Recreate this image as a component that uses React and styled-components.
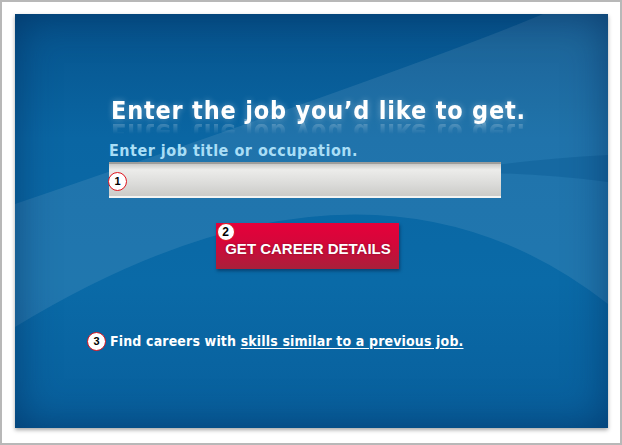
import React from "react";
import styled, { createGlobalStyle } from "styled-components";

const GlobalStyle = createGlobalStyle`
  html, body {
    margin: 0;
    padding: 0;
    background: #ffffff;
  }
  body {
    font-family: "DejaVu Sans Condensed", "DejaVu Sans", sans-serif;
  }
`;

const Frame = styled.div`
  box-sizing: border-box;
  width: 622px;
  height: 445px;
  border: 2px solid #b8b8b8;
  background: #ffffff;
  padding: 12px 12px 0 13px;
`;

const Panel = styled.div`
  position: relative;
  overflow: hidden;
  width: 593px;
  height: 414px;
  background: linear-gradient(to bottom, #06538c 0%, #0a66a3 30%, #0a6aa7 65%, #085f9c 100%);
  box-shadow: 0 2px 4px rgba(0, 0, 0, 0.35);
`;

const Vignette = styled.div`
  position: absolute;
  inset: 0;
  pointer-events: none;
  box-shadow: inset 0 0 40px rgba(0, 35, 80, 0.55);
`;

const Swoosh = styled.svg`
  position: absolute;
  inset: 0;
  width: 100%;
  height: 100%;
`;

const Content = styled.div`
  position: relative;
  display: flex;
  flex-direction: column;
  padding: 82px 0 0 94px;
`;

const Title = styled.h1`
  margin: 0 0 0 2px;
  font-size: 25px;
  line-height: 29px;
  font-weight: bold;
  color: #ffffff;
  letter-spacing: 0.8px;
  text-shadow: 0 0 6px rgba(255, 255, 255, 0.35);
  -webkit-box-reflect: below -7px linear-gradient(transparent 45%, rgba(255, 255, 255, 0.35));
`;

const Label = styled.div`
  margin-top: 16px;
  font-size: 16px;
  line-height: 19px;
  letter-spacing: 0.5px;
  color: #a9def6;
  font-weight: bold;
`;

const InputWrap = styled.div`
  position: relative;
  margin-top: 2px;
  width: 392px;
  height: 36px;
`;

const Input = styled.input`
  box-sizing: border-box;
  width: 100%;
  height: 100%;
  border: none;
  border-top: 2px solid #9d9d9b;
  border-bottom: 2px solid #f4f4f2;
  background: linear-gradient(to bottom, #c9c9c7 0%, #ececea 18%, #dcdcda 60%, #cbcbc8 100%);
  outline: none;
  padding: 0 26px;
  font-size: 14px;
`;

const Badge = styled.span`
  box-sizing: border-box;
  display: inline-flex;
  align-items: center;
  justify-content: center;
  width: 19px;
  height: 19px;
  border-radius: 50%;
  background: #ffffff;
  border: 1.5px solid #e0141e;
  color: #000000;
  font-family: "Liberation Sans", Arial, sans-serif;
  font-weight: bold;
  font-size: 11px;
  letter-spacing: 0;
  line-height: 1;
  flex-shrink: 0;
`;

const InputBadge = styled(Badge)`
  position: absolute;
  left: -1px;
  top: 10px;
`;

const ButtonRow = styled.div`
  display: flex;
  justify-content: center;
  width: 396px;
  margin-top: 25px;
`;

const Button = styled.button`
  position: relative;
  width: 183px;
  height: 46px;
  border: none;
  padding: 4px 0 0 2px;
  background: linear-gradient(to bottom, #e6003a 0%, #d4073a 45%, #a8203a 100%);
  box-shadow: 1px 2px 3px rgba(0, 20, 50, 0.45);
  color: #ffffff;
  font-family: "Liberation Sans", Arial, sans-serif;
  font-weight: bold;
  font-size: 15px;
  letter-spacing: 0;
  text-shadow: 0 0 2px rgba(80, 0, 20, 0.6);
  cursor: pointer;
`;

const ButtonBadge = styled(Badge)`
  position: absolute;
  left: 1px;
  top: 0px;
  width: 18px;
  height: 18px;
  text-shadow: none;
  font-size: 12px;
`;

const FooterRow = styled.div`
  display: flex;
  align-items: center;
  gap: 4px;
  margin: 62px 0 0 -22px;
  font-size: 14px;
  line-height: 20px;
  letter-spacing: 0.15px;
  font-weight: bold;
  color: #ffffff;
`;

const Link = styled.a`
  color: #ffffff;
  text-decoration: underline;
  text-underline-offset: 2px;
`;

export default function App() {
  return (
    <>
      <GlobalStyle />
      <Frame>
        <Panel>
          <Swoosh viewBox="0 0 593 414" preserveAspectRatio="none">
            <path
              d="M528 0 Q420 46 0 190 L0 313 Q350 100 593 290 L593 0 Z"
              fill="#ffffff"
              fillOpacity="0.09"
            />
            <path d="M593 141 Q500 146 420 160 Q500 156 593 168 Z" fill="#06558e" fillOpacity="0.35" />
          </Swoosh>
          <Vignette />
          <Content>
            <Title>Enter the job you’d like to get.</Title>
            <Label>Enter job title or occupation.</Label>
            <InputWrap>
              <Input type="text" aria-label="Job title or occupation" />
              <InputBadge>1</InputBadge>
            </InputWrap>
            <ButtonRow>
              <Button>
                <ButtonBadge>2</ButtonBadge>
                GET CAREER DETAILS
              </Button>
            </ButtonRow>
            <FooterRow>
              <Badge>3</Badge>
              <span>
                Find careers with <Link href="#">skills similar to a previous job.</Link>
              </span>
            </FooterRow>
          </Content>
        </Panel>
      </Frame>
    </>
  );
}
